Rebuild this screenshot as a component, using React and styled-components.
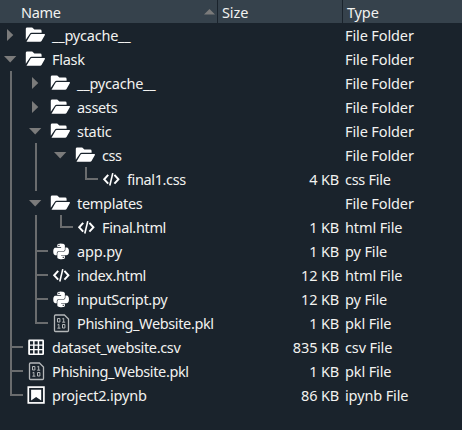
import React from "react";
import styled, { createGlobalStyle, css } from "styled-components";

const GlobalStyle = createGlobalStyle`
  * { box-sizing: border-box; }
  html, body { margin: 0; height: 100%; overflow: hidden; background: #1a232c; }
`;

const Tree = styled.main`
  width: 462px;
  height: 430px;
  overflow: hidden;
  background: #1a232c;
  color: #f2f2f0;
  font: 14.5px/24px "Noto Sans", "Open Sans", sans-serif;
  white-space: pre;
`;

const columns = css`
  display: grid;
  grid-template-columns: 218px 125px 119px;
`;

const Header = styled.header`
  ${columns}
  height: 23px;
  background: #36424c;
`;

const HeaderCell = styled.div`
  display: flex;
  align-items: center;
  justify-content: space-between;
  padding: 0 2px 0 ${(p) => p.$indent}px;
  border-right: ${(p) => (p.$last ? "none" : "1px solid #1a232c")};
`;

const Row = styled.div`
  ${columns}
  height: 24px;
`;

const NameCell = styled.div`
  display: flex;
  align-items: center;
`;

const SizeCell = styled.div`
  text-align: right;
  padding-right: 4px;
`;

const TypeCell = styled.div`
  padding-left: 2px;
`;

const Label = styled.span`
  display: inline-block;
  letter-spacing: ${(p) => p.$track ?? -0.3}px;
`;

const line = "#6a6c6e";
const vertical = (h) => `linear-gradient(${line}, ${line}) 10px 0 / 2px ${h}px no-repeat`;
const branch = `linear-gradient(${line}, ${line}) 10px 11px / 13px 2px no-repeat`;
const guides = {
  pass: vertical(24),
  tee: `${vertical(24)}, ${branch}`,
  end: `${vertical(13)}, ${branch}`,
};

const Guide = styled.span`
  flex: none;
  display: flex;
  align-items: center;
  width: 25px;
  height: 24px;
  background: ${(p) => guides[p.$kind] || "none"};
`;

const IconBox = styled.span`
  flex: none;
  display: flex;
  width: 27px;
  height: 24px;
`;

const Svg = styled.svg`
  display: block;
  flex: none;
`;

const Closed = () => (
  <Svg width="25" height="24"><path d="M7 6v12l6.3-6z" fill="#7b7b7b" /></Svg>
);
const Opened = () => (
  <Svg width="25" height="24"><path d="M4 9h12.3l-6.1 6.4z" fill="#7b7b7b" /></Svg>
);

const icons = {
  folder: (
    <g fill="#fff" transform="translate(0 .8)">
      <path d="M.8 16V5Q.8 3.6 2.2 3.6H7.2L9.4 5.8H15.2Q16.6 5.8 16.6 7.2V8.9H6.6Q5.5 8.9 4.9 9.9Z" />
      <path d="M1.5 17.9L5.4 11.1Q5.8 10.2 6.8 10.2H19.2Q20.5 10.2 19.8 11.4L16.5 17.1Q16.1 17.9 15.2 17.9Z" />
    </g>
  ),
  code: (
    <g fill="none" stroke="#fff" strokeWidth="2" transform="translate(.8 .6)">
      <path d="M7.4 7.3L3.4 11.7L7.4 16.1M13.6 7.3L17.6 11.7L13.6 16.1" />
      <path d="M12 5.5L9 17.9" strokeWidth="1.6" />
    </g>
  ),
  python: (
    <g transform="translate(3.3 4.6) scale(.65)" fill="#fff">
      <path d="M14.25.18l.9.2.73.26.59.3.45.32.34.34.25.34.16.33.1.3.04.26.02.2-.01.13V8.5l-.05.63-.13.55-.21.46-.26.38-.3.31-.33.25-.35.19-.35.14-.33.1-.3.07-.26.04-.21.02H8.77l-.69.05-.59.14-.5.22-.41.27-.33.32-.27.35-.2.36-.15.37-.1.35-.07.32-.04.27-.02.21v3.06H3.17l-.21-.03-.28-.07-.32-.12-.35-.18-.36-.26-.36-.36-.35-.46-.32-.59-.28-.73-.21-.88-.14-1.05-.05-1.23.06-1.22.16-1.04.24-.87.32-.71.36-.57.4-.44.42-.33.42-.24.4-.16.36-.1.32-.05.24-.01h.16l.06.01h8.16v-.83H6.18l-.01-2.75-.02-.37.05-.34.11-.31.17-.28.25-.26.31-.23.38-.2.44-.18.51-.15.58-.12.64-.1.71-.06.77-.04.84-.02 1.27.05zm-6.3 1.98l-.23.33-.08.41.08.41.23.34.33.22.41.09.41-.09.33-.22.23-.34.08-.41-.08-.41-.23-.33-.33-.22-.41-.09-.41.09zm13.09 3.95l.28.06.32.12.35.18.36.27.36.35.35.47.32.59.28.73.21.88.14 1.04.05 1.23-.06 1.23-.16 1.04-.24.86-.32.71-.36.57-.4.45-.42.33-.42.24-.4.16-.36.09-.32.05-.24.02-.16-.01h-8.22v.82h5.84l.01 2.76.02.36-.05.34-.11.31-.17.29-.25.25-.31.24-.38.2-.44.17-.51.15-.58.13-.64.09-.71.07-.77.04-.84.01-1.27-.04-1.07-.14-.9-.2-.73-.25-.59-.3-.45-.33-.34-.34-.25-.34-.16-.33-.1-.3-.04-.25-.02-.2.01-.13v-5.34l.05-.64.13-.54.21-.46.26-.38.3-.32.33-.24.35-.2.35-.14.33-.1.3-.06.26-.04.21-.02.13-.01h5.84l.69-.05.59-.14.5-.21.41-.28.33-.32.27-.35.2-.36.15-.36.1-.35.07-.32.04-.28.02-.21V6.07h2.09l.14.01zm-6.47 14.25l-.23.33-.08.41.08.41.23.33.33.23.41.08.41-.08.33-.23.23-.33.08-.41-.08-.41-.23-.33-.33-.23-.41-.08-.41.08z" />
    </g>
  ),
  binary: (
    <g fill="none" stroke="#b4b7b9" transform="translate(1 .5)">
      <path d="M4.5 3.5H13.4L17.5 7.6V19Q17.5 20 16.5 20H4.5Q3.5 20 3.5 19V4.5Q3.5 3.5 4.5 3.5Z" strokeWidth="1.3" />
      <path d="M6.5 7H8.9V10.5H6.5ZM11.3 7.4L12.7 6.8V10.5M11.2 10.7H14.2M6.5 13.4L7.9 12.8V16.5M6.4 16.7H9.4M11.5 13H13.9V16.5H11.5Z" />
    </g>
  ),
  grid: (
    <g>
      <rect x="3.2" y="4.5" width="15.8" height="15.5" rx="1.2" fill="#fff" />
      <path fill="#1a232c" d="M5 6.3h3.1v3.1H5zM9.6 6.3h3.1v3.1H9.6zM14.2 6.3h3.1v3.1h-3.1zM5 10.8h3.1v3.1H5zM9.6 10.8h3.1v3.1H9.6zM14.2 10.8h3.1v3.1h-3.1zM5 15.3h3.1v3.1H5zM9.6 15.3h3.1v3.1H9.6zM14.2 15.3h3.1v3.1h-3.1z" />
    </g>
  ),
  notebook: (
    <g>
      <rect x="3.3" y="4.1" width="15.6" height="15.8" fill="none" stroke="#fff" strokeWidth="1.7" />
      <path d="M6.1 6.8H16.2V17.6L11.1 14.1L6.1 17.6Z" fill="#fff" />
    </g>
  ),
};

const Icon = ({ name }) => (
  <IconBox><Svg width="22" height="24">{icons[name]}</Svg></IconBox>
);

const folderType = { type: "File Folder", icon: "folder" };

const rows = [
  { ...folderType, g: ["closed"], name: "__pycache__", nt: -0.22 },
  { ...folderType, g: ["opened"], name: "Flask" },
  { ...folderType, g: ["pass", "closed"], name: "__pycache__", nt: -0.22 },
  { ...folderType, g: ["pass", "closed"], name: "assets", nt: -0.35 },
  { ...folderType, g: ["pass", "opened"], name: "static" },
  { ...folderType, g: ["pass", "pass", "opened"], name: "css", nt: -0.4 },
  { g: ["pass", "pass", "blank", "end"], icon: "code", name: "final1.css", nt: -0.38, size: "4 KB", type: "css File", tt: -0.28 },
  { ...folderType, g: ["pass", "opened"], name: "templates" },
  { g: ["pass", "pass", "end"], icon: "code", name: "Final.html", nt: -0.35, size: "1 KB", type: "html File" },
  { g: ["pass", "tee"], icon: "python", name: "app.py", nt: -0.15, size: "1 KB", type: "py File" },
  { g: ["pass", "tee"], icon: "code", name: "index.html", nt: -0.36, size: "12 KB", type: "html File" },
  { g: ["pass", "tee"], icon: "python", name: "inputScript.py", size: "12 KB", type: "py File" },
  { g: ["pass", "end"], icon: "binary", name: "Phishing_Website.pkl", nt: -0.37, size: "1 KB", type: "pkl File" },
  { g: ["tee"], icon: "grid", name: "dataset_website.csv", nt: -0.34, size: "835 KB", type: "csv File" },
  { g: ["tee"], icon: "binary", name: "Phishing_Website.pkl", nt: -0.37, size: "1 KB", type: "pkl File" },
  { g: ["end"], icon: "notebook", name: "project2.ipynb", nt: -0.18, size: "86 KB", type: "ipynb File" },
];

export default function App() {
  return (
    <>
      <GlobalStyle />
      <Tree>
        <Header>
          <HeaderCell $indent={21}>
            <Label>Name</Label>
            <Svg width="11" height="6"><path d="M0 5.5L5.5 0L11 5.5Z" fill="#7b7b7b" /></Svg>
          </HeaderCell>
          <HeaderCell $indent={4}><Label $track={-0.1}>Size</Label></HeaderCell>
          <HeaderCell $indent={4} $last><Label $track={-0.15}>Type</Label></HeaderCell>
        </Header>
        {rows.map((r, i) => (
          <Row key={i}>
            <NameCell>
              {r.g.map((k, j) => (
                <Guide key={j} $kind={k}>
                  {k === "closed" && <Closed />}
                  {k === "opened" && <Opened />}
                </Guide>
              ))}
              <Icon name={r.icon} />
              <Label $track={r.nt}>{r.name}</Label>
            </NameCell>
            <SizeCell><Label $track={-0.15}>{r.size}</Label></SizeCell>
            <TypeCell><Label $track={r.tt ?? -0.12}>{r.type}</Label></TypeCell>
          </Row>
        ))}
      </Tree>
    </>
  );
}
